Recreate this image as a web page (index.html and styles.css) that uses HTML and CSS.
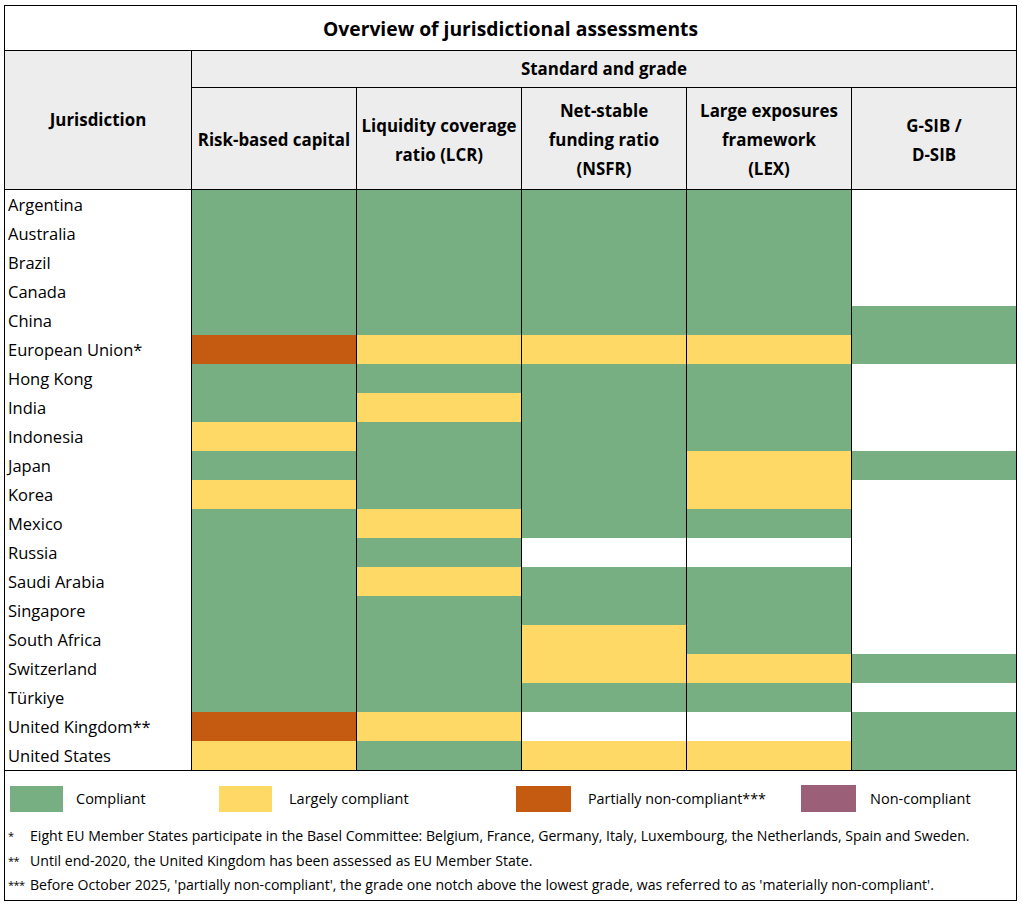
FILE: index.html
```html
<!DOCTYPE html>
<html lang="en">
<head>
<meta charset="utf-8">
<title>Overview of jurisdictional assessments</title>
<link rel="stylesheet" href="styles.css">
</head>
<body>
<div class="frame">
  <div class="tbl">
    <div class="title">Overview of jurisdictional assessments</div>
    <div class="hd jur">Jurisdiction</div>
    <div class="hd std">Standard and grade</div>
    <div class="hd sub">Risk-based capital</div>
    <div class="hd sub">Liquidity coverage<br>ratio (LCR)</div>
    <div class="hd sub">Net-stable<br>funding ratio<br>(NSFR)</div>
    <div class="hd sub">Large exposures<br>framework<br>(LEX)</div>
    <div class="hd sub">G-SIB /<br>D-SIB</div>

    <div class="name">Argentina</div><div class="c g"></div><div class="c g"></div><div class="c g"></div><div class="c g"></div><div class="c w"></div>
    <div class="name">Australia</div><div class="c g"></div><div class="c g"></div><div class="c g"></div><div class="c g"></div><div class="c w"></div>
    <div class="name">Brazil</div><div class="c g"></div><div class="c g"></div><div class="c g"></div><div class="c g"></div><div class="c w"></div>
    <div class="name">Canada</div><div class="c g"></div><div class="c g"></div><div class="c g"></div><div class="c g"></div><div class="c w"></div>
    <div class="name">China</div><div class="c g"></div><div class="c g"></div><div class="c g"></div><div class="c g"></div><div class="c g"></div>
    <div class="name">European Union*</div><div class="c o"></div><div class="c y"></div><div class="c y"></div><div class="c y"></div><div class="c g"></div>
    <div class="name">Hong Kong</div><div class="c g"></div><div class="c g"></div><div class="c g"></div><div class="c g"></div><div class="c w"></div>
    <div class="name">India</div><div class="c g"></div><div class="c y"></div><div class="c g"></div><div class="c g"></div><div class="c w"></div>
    <div class="name">Indonesia</div><div class="c y"></div><div class="c g"></div><div class="c g"></div><div class="c g"></div><div class="c w"></div>
    <div class="name">Japan</div><div class="c g"></div><div class="c g"></div><div class="c g"></div><div class="c y"></div><div class="c g"></div>
    <div class="name">Korea</div><div class="c y"></div><div class="c g"></div><div class="c g"></div><div class="c y"></div><div class="c w"></div>
    <div class="name">Mexico</div><div class="c g"></div><div class="c y"></div><div class="c g"></div><div class="c g"></div><div class="c w"></div>
    <div class="name">Russia</div><div class="c g"></div><div class="c g"></div><div class="c w"></div><div class="c w"></div><div class="c w"></div>
    <div class="name">Saudi Arabia</div><div class="c g"></div><div class="c y"></div><div class="c g"></div><div class="c g"></div><div class="c w"></div>
    <div class="name">Singapore</div><div class="c g"></div><div class="c g"></div><div class="c g"></div><div class="c g"></div><div class="c w"></div>
    <div class="name">South Africa</div><div class="c g"></div><div class="c g"></div><div class="c y"></div><div class="c g"></div><div class="c w"></div>
    <div class="name">Switzerland</div><div class="c g"></div><div class="c g"></div><div class="c y"></div><div class="c y"></div><div class="c g"></div>
    <div class="name">Türkiye</div><div class="c g"></div><div class="c g"></div><div class="c g"></div><div class="c g"></div><div class="c w"></div>
    <div class="name">United Kingdom**</div><div class="c o"></div><div class="c y"></div><div class="c w"></div><div class="c w"></div><div class="c g"></div>
    <div class="name">United States</div><div class="c y"></div><div class="c g"></div><div class="c y"></div><div class="c y"></div><div class="c g"></div>
  </div>

  <div class="legend">
    <div class="item"><span class="sw g"></span><span class="lbl">Compliant</span></div>
    <div class="item"><span class="sw y"></span><span class="lbl">Largely compliant</span></div>
    <div class="item"><span class="sw o"></span><span class="lbl">Partially non-compliant***</span></div>
    <div class="item"><span class="sw m"></span><span class="lbl">Non-compliant</span></div>
  </div>

  <div class="notes">
    <div class="mk">*</div><div class="nt">Eight EU Member States participate in the Basel Committee: Belgium, France, Germany, Italy, Luxembourg, the Netherlands, Spain and Sweden.</div>
    <div class="mk">**</div><div class="nt">Until end-2020, the United Kingdom has been assessed as EU Member State.</div>
    <div class="mk">***</div><div class="nt">Before October 2025, 'partially non-compliant', the grade one notch above the lowest grade, was referred to as 'materially non-compliant'.</div>
  </div>
</div>
</body>
</html>
```

FILE: styles.css
```css
html, body {
  margin: 0;
  padding: 0;
  background: #ffffff;
}
body {
  padding: 5px 0 0 4px;
  font-family: "Open Sans", "Noto Sans", "Liberation Sans", sans-serif;
  color: #000000;
}
.frame {
  width: 1011px;
  border: 1px solid #000000;
}
.tbl {
  display: grid;
  grid-template-columns: 186px 165px 165px 165px 165px 165px;
  grid-template-rows: 45px 37px 102px repeat(20, 29px);
  border-bottom: 1px solid #000000;
}
.title {
  grid-column: 1 / 7;
  border-bottom: 1px solid #000000;
  display: flex;
  align-items: center;
  justify-content: center;
  font-weight: 700;
  font-size: 19.3px;
}
.hd {
  background: #ededed;
  font-weight: 700;
  font-size: 16.9px;
  line-height: 29px;
  text-align: center;
  display: flex;
  align-items: center;
  justify-content: center;
  border-bottom: 1px solid #000000;
  white-space: nowrap;
}
.jur {
  grid-column: 1;
  grid-row: 2 / 4;
  padding-bottom: 1px;
}
.std {
  grid-column: 2 / 7;
  border-left: 1px solid #000000;
  padding-bottom: 1px;
}
.sub {
  border-left: 1px solid #000000;
  padding-top: 2px;
}
.name {
  font-size: 16.5px;
  padding-left: 3px;
  display: flex;
  align-items: center;
  white-space: nowrap;
}
.c {
  border-left: 1px solid #000000;
}
.g { background: #77ae82; }
.y { background: #fed966; }
.o { background: #c55a11; }
.m { background: #9b5f77; }
.w { background: #ffffff; }

.legend {
  display: grid;
  grid-template-columns: 209px 297px 285px 1fr;
  padding: 14px 0 0 5px;
}
.item {
  display: flex;
  align-items: center;
}
.sw {
  display: block;
  width: 53px;
  height: 26px;
  flex: none;
}
.lbl {
  font-size: 14.5px;
  margin-left: 13px;
  white-space: nowrap;
}
.item:nth-child(2) .lbl { margin-left: 17px; }
.item:nth-child(3) .sw { width: 55px; }
.item:nth-child(3) .lbl { margin-left: 17px; font-size: 14.3px; }
.item:nth-child(4) .sw { width: 55px; height: 27px; }
.item:nth-child(4) .lbl { margin-left: 14px; }

.notes {
  display: grid;
  grid-template-columns: 22px 1fr;
  padding: 12px 0 2px 3px;
  font-size: 14.1px;
  line-height: 24.5px;
}
.mk {
  font-size: 11px;
  letter-spacing: -0.6px;
  white-space: nowrap;
}
.nt {
  white-space: nowrap;
}
```
